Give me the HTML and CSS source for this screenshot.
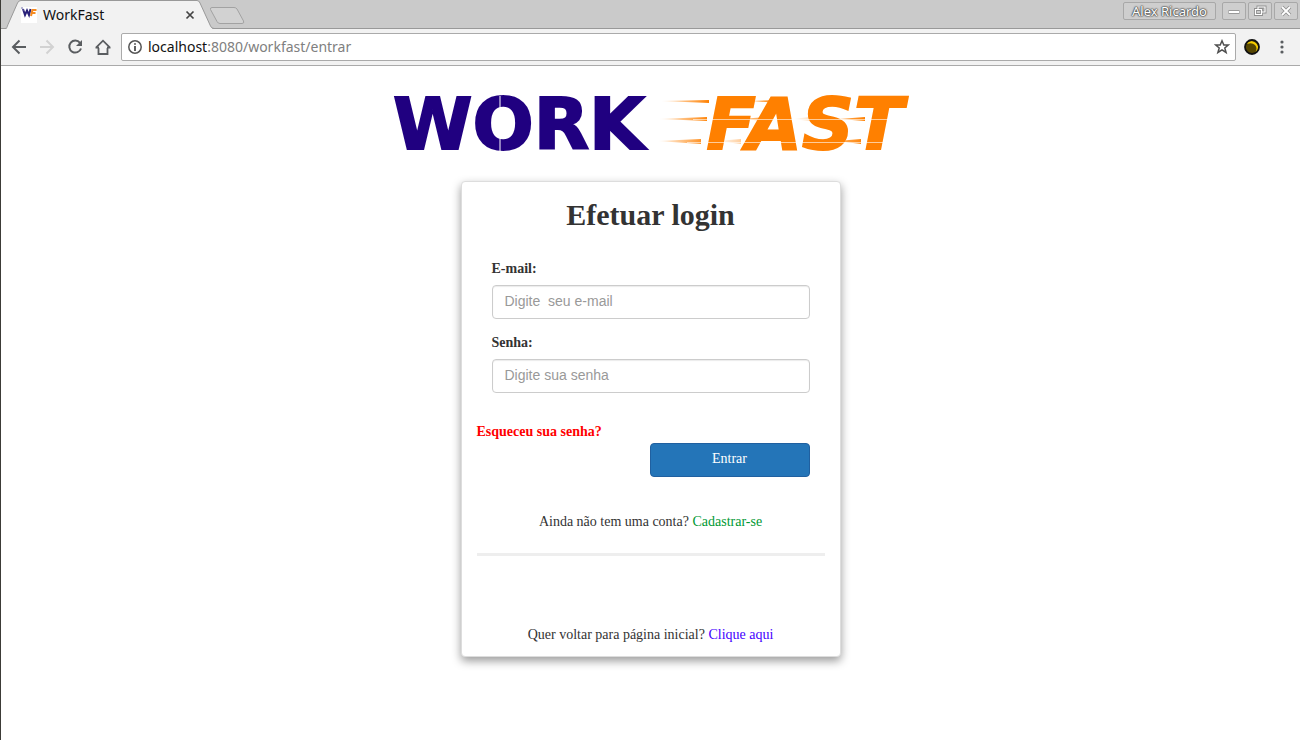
FILE: index.html
```html
<!DOCTYPE html>
<html lang="pt-BR">
<head>
<meta charset="utf-8">
<title>WorkFast</title>
<link rel="stylesheet" href="styles.css">
</head>
<body>
<header class="browser">
  <div class="tab-strip">
    <div class="tabs">
      <svg class="tab-shapes" width="250" height="29" viewBox="0 0 250 29" aria-hidden="true">
        <path d="M0 28.500H4C6 28.500 6 27 7 24.500L16.500 3Q17.500 .5 20 .5H196Q198 .5 199 3L209.500 26Q210.500 28.500 213 28.500H250" fill="#f2f2f2" stroke="#999"/>
        <path d="M6 28.500H211" stroke="#f2f2f2"/>
        <path d="M211 7.500H233Q235 7.500 236 9L242.500 21Q243.500 23.500 241 23.500H219Q217 23.500 216 21.500L209.500 9.500Q209 7.500 211 7.500Z" fill="#d2d2d2" stroke="#a2a2a2"/>
      </svg>
      <div class="tab">
        <svg class="favicon" width="16" height="16" viewBox="0 0 16 16" aria-hidden="true">
          <path d="M0 0H16V16H0Z" fill="#fff"/>
          <path d="M2 2L4 8L6 3.500L8 8L9.500 2" fill="none" stroke="#282078" stroke-width="2"/>
          <path d="M10 9L11.500 3H15.500M11 6H14.500" fill="none" stroke="#f58a20" stroke-width="2"/>
          <path d="M0 1H2M2 3H3" stroke="#6c68a8"/>
        </svg>
        <span class="tab-title">WorkFast</span>
        <button class="icon-button" aria-label="Fechar aba"><svg width="10" height="10" viewBox="0 0 10 10"><path d="M1.500 1.500L8.500 8.500M8.500 1.500L1.500 8.500" stroke="#444" stroke-width="1.700"/></svg></button>
      </div>
    </div>
    <div class="window-controls">
      <button class="window-button user">Alex Ricardo</button>
      <button class="window-button" aria-label="Minimizar"><svg width="14" height="14" viewBox="0 0 14 14"><path d="M1.500 8H12.500" stroke="#999" stroke-width="4"/><path d="M2 8H12" stroke="#fff" stroke-width="2"/></svg></button>
      <button class="window-button" aria-label="Restaurar"><svg width="14" height="14" viewBox="0 0 14 14" fill="none"><path d="M5 5V3H12V8H9M2.500 5.500H8.500V10.500H2.500Z" stroke="#909090" stroke-width="3"/><path d="M5 5V3H12V8H9M2.500 5.500H8.500V10.500H2.500Z" stroke="#fff" stroke-width="1.200"/></svg></button>
      <button class="window-button" aria-label="Fechar"><svg width="14" height="14" viewBox="0 0 14 14"><path d="M3 3L11 11M11 3L3 11" stroke="#909090" stroke-width="3.600"/><path d="M3 3L11 11M11 3L3 11" stroke="#fff" stroke-width="1.800"/></svg></button>
    </div>
  </div>
  <div class="toolbar">
    <nav class="nav-buttons" aria-label="Navegação">
      <button class="icon-button" aria-label="Voltar"><svg width="16" height="16" viewBox="0 0 16 16" fill="none" stroke="#5a5d60" stroke-width="2"><path d="M15 8H2.500M8.500 1.500L2 8L8.500 14.500"/></svg></button>
      <button class="icon-button" aria-label="Avançar"><svg width="16" height="16" viewBox="0 0 16 16" fill="none" stroke="#d2d2d2" stroke-width="2"><path d="M1 8H13.500M7.500 1.500L14 8L7.500 14.500"/></svg></button>
      <button class="icon-button" aria-label="Recarregar"><svg width="16" height="16" viewBox="0 0 16 16"><path d="M13 3.800A6 6 0 1 0 14 9.500" fill="none" stroke="#5a5d60" stroke-width="2"/><path d="M15 1V7H9Z" fill="#5a5d60"/></svg></button>
      <button class="icon-button" aria-label="Página inicial"><svg width="16" height="16" viewBox="0 0 16 16" fill="none" stroke="#5a5d60" stroke-width="1.800"><path d="M3.500 9V15H12.500V9M.5 8.700H4M12 8.700H15.500M1 8.700L8 1.700L15 8.700"/></svg></button>
    </nav>
    <div class="address">
      <svg width="16" height="16" viewBox="0 0 16 16" aria-hidden="true"><circle cx="8" cy="8" r="6.200" fill="none" stroke="#555" stroke-width="1.500"/><path d="M8 7V12M8 4.200V5.800" stroke="#444" stroke-width="1.700"/></svg>
      <span class="url"><span class="host">localhost</span>:8080/workfast/entrar</span>
      <button class="icon-button" aria-label="Adicionar aos favoritos"><svg width="16" height="16" viewBox="0 0 16 16"><path d="M8 1.800L9.800 6H14.300L10.800 8.900L12.100 13.500L8 10.900L3.900 13.500L5.200 8.900L1.700 6H6.200Z" fill="none" stroke="#505050" stroke-width="1.500"/></svg></button>
    </div>
    <button class="icon-button" aria-label="Extensão"><svg width="16" height="16" viewBox="0 0 16 16"><circle cx="8" cy="8" r="7" fill="#554500"/><path d="M4 3A7 7 0 0 1 14 11Q13 13 11 14Q14 9 11 6Q8 3 3 5Z" fill="#f5cc00"/><circle cx="8" cy="8" r="7" fill="none" stroke="#111" stroke-width="1.800"/></svg></button>
    <button class="icon-button" aria-label="Menu"><svg width="16" height="16" viewBox="0 0 16 16" fill="#5a5d60"><circle cx="8" cy="3" r="1.600"/><circle cx="8" cy="8" r="1.600"/><circle cx="8" cy="13" r="1.600"/></svg></button>
  </div>
</header>
<main class="page">
  <svg class="logo" width="520" height="92" viewBox="0 0 520 92" role="img" aria-label="WorkFast">
    <defs>
      <linearGradient id="trail"><stop offset="0" stop-color="#ff8000" stop-opacity="0"/><stop offset="1" stop-color="#ff8000"/></linearGradient>
    </defs>
    <g fill="url(#trail)">
      <path d="M270 23L318 22V25ZM268 41L316 39V43ZM266 63L310 61V66Z"/>
      <path d="M360 23L388 22V25ZM348 41L376 39V43ZM326 63L350 61V66Z"/>
      <path d="M402 41L418 39V43ZM448 41L474 39V43ZM446 63L470 61V66Z"/>
    </g>
    <text class="word work" x="2" y="71">WORK</text>
    <text class="word fast" x="512" y="71" text-anchor="end">FAST</text>
    <g stroke="#fff">
      <path d="M109 18V32M109 58V73"/>
      <path d="M302 41.500H500M296 64.500H500" stroke-opacity=".6"/>
    </g>
  </svg>
  <form class="card">
    <h1 class="title">Efetuar login</h1>
    <div class="field">
      <label for="email">E-mail:</label>
      <input id="email" type="email" placeholder="Digite  seu e-mail">
    </div>
    <div class="field">
      <label for="senha">Senha:</label>
      <input id="senha" type="password" placeholder="Digite sua senha">
    </div>
    <a class="forgot" href="#">Esqueceu sua senha?</a>
    <button class="submit" type="submit">Entrar</button>
    <p class="register">Ainda não tem uma conta? <a class="green" href="#">Cadastrar-se</a></p>
    <hr class="divider">
    <p class="home">Quer voltar para página inicial? <a class="violet" href="#">Clique aqui</a></p>
  </form>
</main>
</body>
</html>
```
FILE: styles.css
```css
* { box-sizing: border-box; }
body {
  margin: 0;
  min-height: 100vh;
  border-left: 1px solid #3c3b37;
  background: #fff;
  color: #333;
  font: 14px/20px "Liberation Serif", "Times New Roman", serif;
}
a { text-decoration: none; }
p { margin: 0; }
button { font: inherit; }
svg { display: block; flex: none; }

.browser { font-family: "Noto Sans", "Open Sans", sans-serif; border-bottom: 1px solid #aaa; }
.tab-strip {
  display: flex;
  justify-content: space-between;
  height: 29px;
  background: #cacaca;
  box-shadow: inset 0 -1px #999;
}
.tabs { display: grid; }
.tab-shapes, .tab { grid-area: 1 / 1; }
.tab { display: flex; align-items: center; width: 194px; height: 29px; padding-left: 20px; z-index: 1; }
.tab-title { flex: 1; padding-left: 6px; color: #111; }
.icon-button { display: flex; padding: 0; border: 0; background: none; }
.window-controls { display: flex; gap: 2px; padding: 2px 2px 0 0; }
.window-button {
  display: flex;
  align-items: center;
  justify-content: center;
  width: 24px;
  height: 18px;
  padding: 0;
  border: 1px solid #a8a8a8;
  border-radius: 2px;
  background: #cecece;
}
.user {
  width: 93px;
  margin-right: 4px;
  color: #fff;
  font-size: 13px;
  line-height: 16px;
  text-shadow: 0 0 1px #444, 0 0 1px #444, 0 0 2px #444, 0 0 2px #666;
}
.toolbar {
  display: flex;
  align-items: center;
  gap: 8px;
  height: 36px;
  padding: 0 10px;
  background: #f2f2f2;
}
.nav-buttons { display: flex; gap: 12px; padding-right: 2px; }
.address {
  display: flex;
  flex: 1;
  align-items: center;
  gap: 5px;
  height: 28px;
  padding: 0 5px;
  border: 1px solid #aaa;
  border-radius: 2px;
  background: #fff;
}
.toolbar > .icon-button + .icon-button { margin-left: 6px; }
.url { flex: 1; color: #808080; }
.host { color: #111; }

.page { display: flex; flex-direction: column; align-items: center; padding: 12px 15px 40px; }
.logo { max-width: 100%; }
.word { font: bold 72px "DejaVu Sans", sans-serif; stroke-width: 2px; }
.work { fill: #200080; stroke: #200080; }
.fast { fill: #ff8000; stroke: #ff8000; font-style: oblique; }

.card {
  display: flex;
  flex-direction: column;
  width: 100%;
  max-width: 380px;
  margin-top: 11px;
  padding: 16px 15px 11px;
  border: 1px solid #ddd;
  border-radius: 4px;
  background: #fff;
  box-shadow: 0 4px 10px rgba(0, 0, 0, .4);
}
.title { margin: 0 0 28px; font-size: 30px; line-height: 33px; text-align: center; }
.field { display: flex; flex-direction: column; gap: 6px; margin: 0 15px 14px; }
.field label { font-weight: bold; }
.field input {
  width: 100%;
  height: 34px;
  padding: 5px 12px 7px;
  border: 1px solid #ccc;
  border-radius: 4px;
  background: #fff;
  box-shadow: inset 0 1px 1px rgba(0, 0, 0, .08);
  color: #555;
  font: 14px/20px "Liberation Sans", Arial, sans-serif;
}
.field input::placeholder { color: #999; opacity: 1; }
.forgot { align-self: flex-start; margin-top: 15px; color: #f00; font-weight: bold; }
.submit {
  align-self: flex-end;
  width: 160px;
  height: 34px;
  margin: 1px 15px 0 0;
  padding: 0 0 2px;
  border: 1px solid #2060a0;
  border-radius: 4px;
  background: #2475b8;
  color: #fff;
}
.register, .home { text-align: center; }
.register { margin-top: 35px; }
.divider { width: 100%; height: 3px; margin: 21px 0 69px; border: 0; background: #eee; }
.green { color: #093; }
.violet { color: #40f; }
```
